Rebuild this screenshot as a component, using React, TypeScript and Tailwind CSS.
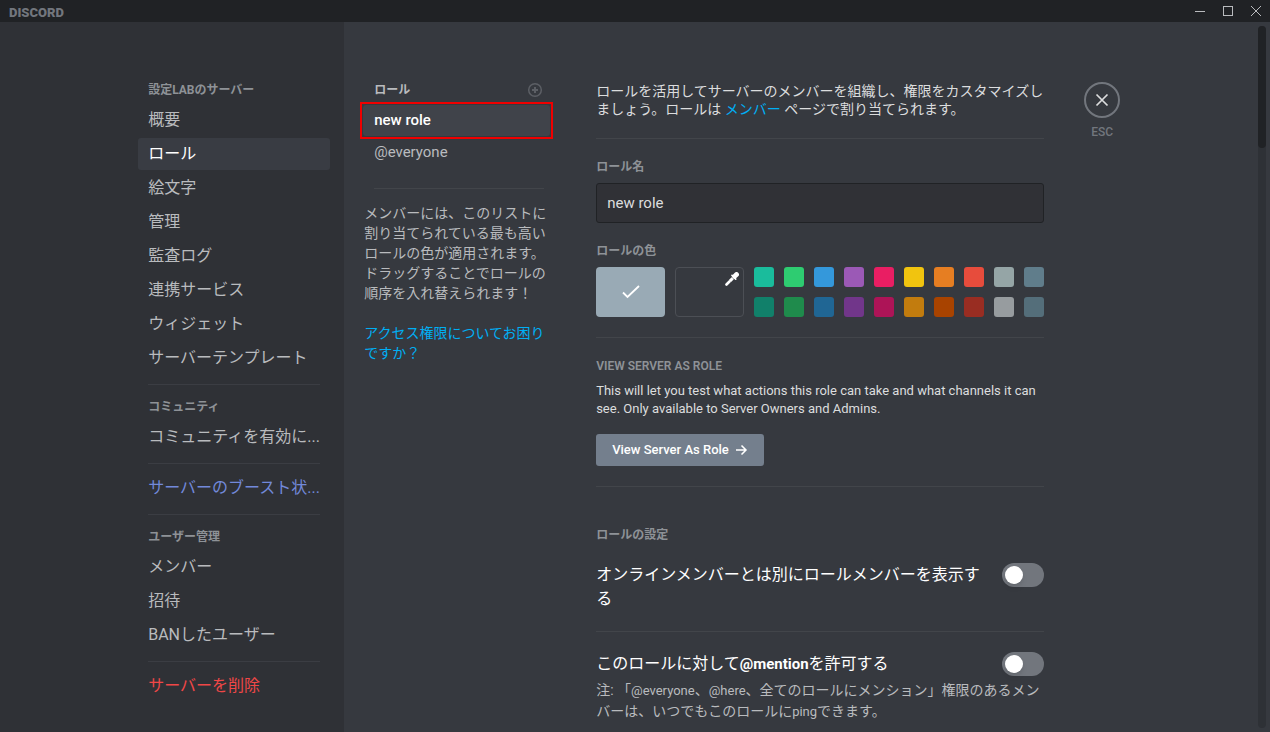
import { ReactNode, useState } from 'react';
import clsx from 'clsx';

interface NavItem {
  label: string;
  tone?: 'boost' | 'danger';
}

interface NavSection {
  title?: string;
  items: NavItem[];
}

const sections: NavSection[] = [
  {
    title: '設定LABのサーバー',
    items: [
      { label: '概要' },
      { label: 'ロール' },
      { label: '絵文字' },
      { label: '管理' },
      { label: '監査ログ' },
      { label: '連携サービス' },
      { label: 'ウィジェット' },
      { label: 'サーバーテンプレート' },
    ],
  },
  { title: 'コミュニティ', items: [{ label: 'コミュニティを有効に...' }] },
  { items: [{ label: 'サーバーのブースト状...', tone: 'boost' }] },
  {
    title: 'ユーザー管理',
    items: [{ label: 'メンバー' }, { label: '招待' }, { label: 'BANしたユーザー' }],
  },
  { items: [{ label: 'サーバーを削除', tone: 'danger' }] },
];

const swatches = [
  { name: 'teal', className: 'bg-[#1abc9c]' },
  { name: 'green', className: 'bg-[#2ecc71]' },
  { name: 'blue', className: 'bg-[#3498db]' },
  { name: 'purple', className: 'bg-[#9b59b6]' },
  { name: 'pink', className: 'bg-[#e91e63]' },
  { name: 'yellow', className: 'bg-[#f1c40f]' },
  { name: 'orange', className: 'bg-[#e67e22]' },
  { name: 'red', className: 'bg-[#e74c3c]' },
  { name: 'gray', className: 'bg-[#95a5a6]' },
  { name: 'slate', className: 'bg-[#607d8b]' },
  { name: 'dark teal', className: 'bg-[#11806a]' },
  { name: 'dark green', className: 'bg-[#1f8b4c]' },
  { name: 'dark blue', className: 'bg-[#206694]' },
  { name: 'dark purple', className: 'bg-[#71368a]' },
  { name: 'dark pink', className: 'bg-[#ad1457]' },
  { name: 'dark yellow', className: 'bg-[#c27c0e]' },
  { name: 'dark orange', className: 'bg-[#a84300]' },
  { name: 'dark red', className: 'bg-[#992d22]' },
  { name: 'dark gray', className: 'bg-[#979c9f]' },
  { name: 'dark slate', className: 'bg-[#546e7a]' },
];

function TitleBar() {
  return (
    <header className="flex h-[22px] shrink-0 items-center justify-between bg-[#202225]">
      <span className="pt-[2px] pl-[9px] text-[13px] leading-none font-black text-[#72767d]">DISCORD</span>
      <div className="flex h-full text-[#b9bbbe]">
        <button aria-label="Minimize" className="flex w-7 items-center justify-center">
          <svg width="12" height="12" viewBox="0 0 12 12" fill="currentColor">
            <rect x="1" y="6" width="10" height="1" />
          </svg>
        </button>
        <button aria-label="Maximize" className="flex w-7 items-center justify-center">
          <svg width="12" height="12" viewBox="0 0 12 12" fill="none" stroke="currentColor">
            <rect x="1.5" y="1.5" width="9" height="9" />
          </svg>
        </button>
        <button aria-label="Close window" className="flex w-7 items-center justify-center">
          <svg width="12" height="12" viewBox="0 0 12 12" fill="none" stroke="currentColor">
            <path d="M1 1l10 10M11 1L1 11" />
          </svg>
        </button>
      </div>
    </header>
  );
}

function Sidebar() {
  const [active, setActive] = useState('ロール');

  return (
    <nav className="flex w-[27.1%] shrink-0 justify-end bg-[#2f3136] pt-[54px] pr-[14px]">
      <div className="w-48">
        {sections.map((section, i) => (
          <div key={i}>
            {i > 0 && <hr className="mx-[10px] mt-[10px] mb-2 border-[#3b3d43]" />}
            {section.title && (
              <h2 className="h-7 px-[10px] text-[12px] leading-7 font-bold text-[#8e9297]">{section.title}</h2>
            )}
            <div className="flex flex-col gap-[2px]">
              {section.items.map(item => (
                <button
                  key={item.label}
                  onClick={() => setActive(item.label)}
                  className={clsx(
                    'h-8 w-full truncate rounded-[3px] px-[10px] text-left text-[16px] leading-5',
                    item.label === active && 'bg-[#393c43] text-white',
                    item.label !== active && !item.tone && 'text-[#b9bbbe]',
                    item.tone === 'boost' && 'text-[#7289da]',
                    item.tone === 'danger' && 'text-[#f04747]',
                  )}
                >
                  {item.label}
                </button>
              ))}
            </div>
          </div>
        ))}
      </div>
    </nav>
  );
}

function RoleList() {
  return (
    <aside className="w-[190px] shrink-0">
      <div className="flex h-4 items-center justify-between pr-[11px] pl-[10px]">
        <h2 className="text-[12px] leading-4 font-bold text-[#b9bbbe]">ロール</h2>
        <button aria-label="ロールを追加" className="text-[#5c5f65]">
          <svg width="16" height="16" viewBox="0 0 16 16" fill="none" stroke="currentColor" strokeWidth="1.5">
            <circle cx="8" cy="8" r="6.3" />
            <path d="M8 5v6M5 8h6" strokeWidth="2" />
          </svg>
        </button>
      </div>
      <div className="mt-1 mr-px -ml-1 border-2 border-[#f00000] p-px">
        <button className="block h-[31px] w-full rounded-[3px] bg-[#40434a] px-[11px] pb-[2px] text-left text-[15px] leading-5 font-medium text-white">
          new role
        </button>
      </div>
      <button className="block h-7 w-full px-[10px] pb-[2px] text-left text-[15px] leading-5 text-[#b9bbbe]">
        @everyone
      </button>
      <hr className="mx-[10px] mt-[21px] mb-[14px] border-[#42454a]" />
      <p className="text-[14px] leading-5 text-[#b9bbbe]">
        メンバーには、このリストに割り当てられている最も高いロールの色が適用されます。ドラッグすることでロールの順序を入れ替えられます！
      </p>
      <a href="#help" className="mt-5 block text-[14px] leading-5 text-[#00aff4]">
        アクセス権限についてお困りですか？
      </a>
    </aside>
  );
}

function Divider({ className }: { className?: string }) {
  return <hr className={clsx('border-[#42454a]', className)} />;
}

function Label({ children, htmlFor, className }: { children: ReactNode; htmlFor?: string; className?: string }) {
  const classes = clsx('block text-[12px] leading-4 font-semibold text-[#8e9297]', className);
  return htmlFor ? (
    <label htmlFor={htmlFor} className={classes}>
      {children}
    </label>
  ) : (
    <h3 className={classes}>{children}</h3>
  );
}

function Toggle({ id }: { id: string }) {
  return (
    <span className="relative h-6 w-[42px] shrink-0">
      <input
        id={id}
        type="checkbox"
        role="switch"
        className="peer block h-6 w-[42px] appearance-none rounded-full bg-[#72767d] checked:bg-[#43b581]"
      />
      <span className="pointer-events-none absolute top-[3px] left-[3px] h-[18px] w-[18px] rounded-full bg-white shadow-md peer-checked:left-[21px]" />
    </span>
  );
}

function RoleForm() {
  const [name, setName] = useState('new role');

  return (
    <section className="max-w-[448px] min-w-0 flex-1">
      <p className="text-[14px] leading-[18px] text-[#dcddde]">
        ロールを活用してサーバーのメンバーを組織し、権限をカスタマイズしましょう。ロールは{' '}
        <a href="#members" className="text-[#00aff4]">
          メンバー
        </a>{' '}
        ページで割り当てられます。
      </p>
      <Divider className="my-5" />

      <Label htmlFor="role-name" className="mb-2">
        ロール名
      </Label>
      <input
        id="role-name"
        type="text"
        value={name}
        onChange={e => setName(e.target.value)}
        className="h-10 w-full rounded-[3px] border border-[#202225] bg-[#303136] px-[10px] text-[15px] text-[#dcddde] outline-none"
      />

      <Label className="mt-5 mb-2">ロールの色</Label>
      <div className="flex gap-[10px]">
        <button
          aria-label="Default color"
          className="flex h-[50px] w-[69px] items-center justify-center rounded-[4px] bg-[#99aab5] text-white"
        >
          <svg width="20" height="16" viewBox="0 0 20 16" fill="none" stroke="currentColor" strokeWidth="1.8">
            <path d="M2 8.500l4.500 4.500L18 2" />
          </svg>
        </button>
        <button
          aria-label="Custom color"
          className="flex h-[50px] w-[69px] items-start justify-end rounded-[4px] border border-[#4c4f55] p-1 text-white"
        >
          <svg width="14" height="14" viewBox="0 0 14 14" fill="none" stroke="currentColor">
            <path d="M9.600 4.400l1.900-1.900" strokeWidth="4.800" strokeLinecap="round" />
            <path d="M7 3.400l3.700 3.700" strokeWidth="1.700" strokeLinecap="round" />
            <path d="M7.700 6.300L5.100 8.900" strokeWidth="3" />
            <path d="M4.500 9.500L1.500 12.500" strokeWidth="2.600" strokeLinecap="round" />
          </svg>
        </button>
        <div className="grid flex-1 grid-cols-[repeat(10,20px)] justify-between gap-y-[10px]">
          {swatches.map(s => (
            <button key={s.name} aria-label={s.name} className={clsx('h-5 w-5 rounded-[3px]', s.className)} />
          ))}
        </div>
      </div>
      <Divider className="my-5" />

      <Label>VIEW SERVER AS ROLE</Label>
      <p className="mt-2 text-[13px] leading-[18px] text-[#dcddde]">
        This will let you test what actions this role can take and what channels it can see. Only available to Server
        Owners and Admins.
      </p>
      <button className="mt-4 flex h-8 items-center gap-[6px] rounded-[3px] bg-[#747f8d] px-4 text-[13px] font-medium text-white">
        View Server As Role
        <svg width="13" height="12" viewBox="0 0 13 12" fill="none" stroke="currentColor" strokeWidth="1.5">
          <path d="M1 6h10M6.500 1.500L11 6l-4.500 4.500" />
        </svg>
      </button>
      <Divider className="mt-5 mb-10" />

      <Label className="mb-5">ロールの設定</Label>
      <div className="flex justify-between gap-4">
        <label htmlFor="hoist" className="text-[16px] leading-6 text-white">
          オンラインメンバーとは別にロールメンバーを表示する
        </label>
        <Toggle id="hoist" />
      </div>
      <Divider className="my-5" />
      <div className="flex justify-between gap-4">
        <label htmlFor="mention" className="text-[16px] leading-6 text-white">
          このロールに対して<b className="text-[15px]">@mention</b>を許可する
        </label>
        <Toggle id="mention" />
      </div>
      <p className="mt-1 text-[14px] leading-5 text-[#b9bbbe]">
        注: 「<span className="text-[13px]">@everyone</span>、<span className="text-[13px]">@here</span>
        、全てのロールにメンション」権限のあるメンバーは、いつでもこのロールに
        <span className="text-[13px]">ping</span>できます。
      </p>
    </section>
  );
}

export default function App() {
  return (
    <div className="flex h-screen flex-col overflow-hidden bg-[#36393f] font-['Roboto','Noto_Sans_CJK_JP',sans-serif]">
      <TitleBar />
      <div className="flex min-h-0 flex-1">
        <Sidebar />
        <main className="flex min-w-0 flex-1 overflow-hidden pt-[60px] pl-5">
          <RoleList />
          <div className="ml-[42px] flex min-w-0 flex-1 gap-10">
            <RoleForm />
            <div className="flex flex-col items-center">
              <button
                aria-label="閉じる"
                className="flex h-9 w-9 items-center justify-center rounded-full border-2 border-[#72767d] text-[#dcddde]"
              >
                <svg width="14" height="14" viewBox="0 0 14 14" fill="none" stroke="currentColor" strokeWidth="1.700">
                  <path d="M1.500 1.500l11 11M12.500 1.500l-11 11" />
                </svg>
              </button>
              <span className="mt-[6px] text-[12px] leading-4 font-medium text-[#72767d]">ESC</span>
            </div>
          </div>
        </main>
        {/* Scrollbar */}
        <div className="mt-1 mr-1 mb-1 w-2 shrink-0 rounded bg-[#2e3136]">
          <div className="h-[122px] rounded bg-[#202225]" />
        </div>
      </div>
    </div>
  );
}
